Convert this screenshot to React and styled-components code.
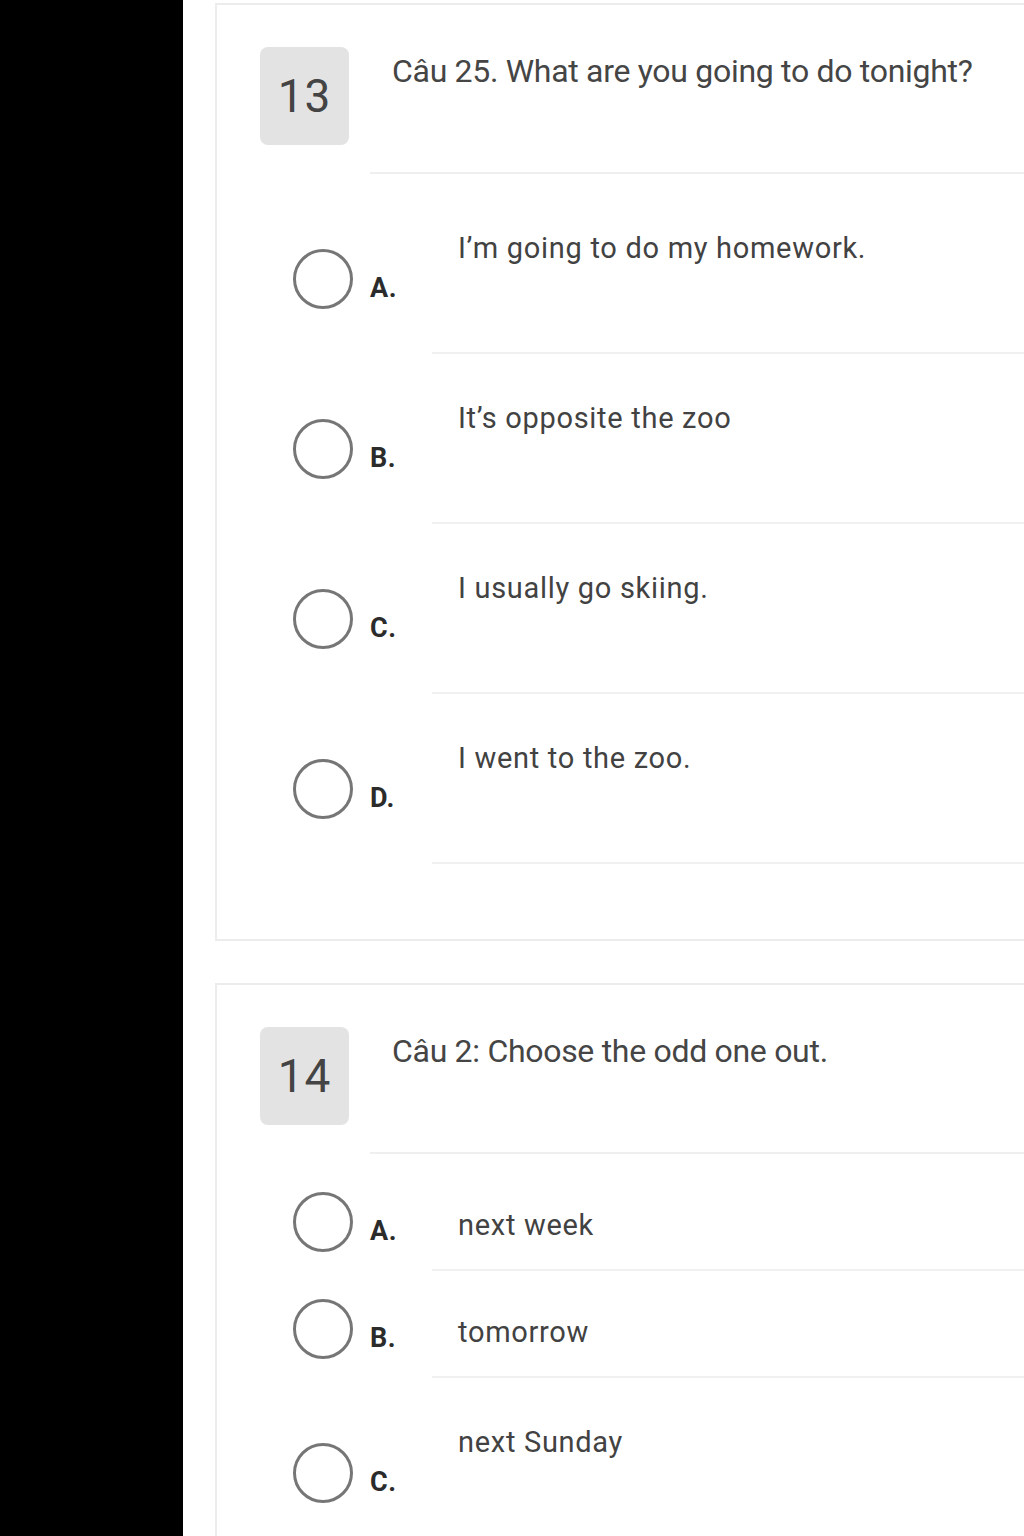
import React from "react";
import styled, { createGlobalStyle } from "styled-components";

const Global = createGlobalStyle`
  html, body { margin: 0; padding: 0; background: #ffffff; overflow: hidden; }
  body { font-family: Roboto, "Noto Sans", "Liberation Sans", sans-serif; }
`;

const Page = styled.div`
  display: flex;
  width: 1024px;
  height: 1536px;
  overflow: hidden;
`;

const Strip = styled.div`
  width: 183px;
  flex: none;
  background: #000;
`;

const Main = styled.div`
  flex: 1;
  padding: 3px 0 0 32px;
  display: flex;
  flex-direction: column;
  gap: 42px;
  min-width: 0;
`;

const Card = styled.section`
  border: 2px solid #ececec;
  border-right: none;
  background: #fff;
  padding: 42px 0 ${(p) => p.$bottom}px 43px;
`;

const Header = styled.div`
  display: flex;
  align-items: flex-start;
`;

const NumBox = styled.div`
  width: 89px;
  height: 98px;
  flex: none;
  border-radius: 8px;
  background: #e3e3e3;
  color: #444;
  font-size: 46px;
  display: flex;
  align-items: center;
  justify-content: center;
  letter-spacing: 1px;
`;

const Question = styled.div`
  flex: 1;
  margin-left: 21px;
  padding: 4px 0 0 22px;
  height: 121px;
  border-bottom: 2px solid #efefef;
  font-size: 32px;
  line-height: 40px;
  color: #454545;
  letter-spacing: -0.3px;
`;

const Options = styled.div`
  padding-top: 10px;
  display: flex;
  flex-direction: column;
`;

const Row = styled.div`
  display: flex;
  align-items: flex-start;
`;

const Choice = styled.label`
  width: 172px;
  flex: none;
  box-sizing: border-box;
  padding-left: 33px;
  margin-top: ${(p) => p.$top}px;
  display: flex;
  align-items: center;
  gap: 17px;
`;

const Radio = styled.span`
  width: 60px;
  height: 60px;
  box-sizing: border-box;
  border-radius: 50%;
  border: 3px solid #767676;
  flex: none;
`;

const Letter = styled.span`
  font-size: 27px;
  font-weight: 700;
  line-height: 34px;
  color: #2b2b2b;
  margin-top: 18px;
  letter-spacing: 0.5px;
`;

const Answer = styled.div`
  flex: 1;
  box-sizing: border-box;
  height: ${(p) => p.$height}px;
  padding: ${(p) => p.$textTop}px 0 0 26px;
  border-bottom: 2px solid #f0f0f0;
  font-size: 29px;
  line-height: 34px;
  color: #424242;
  letter-spacing: 0.7px;
`;

const variants = {
  tall: { height: 170, circleTop: 65, textTop: 47 },
  compact: { height: 107, circleTop: 28, textTop: 44 },
};

const questions = [
  {
    n: 13,
    q: "Câu 25. What are you going to do tonight?",
    bottom: 75,
    opts: [
      ["A.", "I’m going to do my homework.", "tall"],
      ["B.", "It’s opposite the zoo", "tall"],
      ["C.", "I usually go skiing.", "tall"],
      ["D.", "I went to the zoo.", "tall"],
    ],
  },
  {
    n: 14,
    q: "Câu 2: Choose the odd one out.",
    bottom: 40,
    opts: [
      ["A.", "next week", "compact"],
      ["B.", "tomorrow", "compact"],
      ["C.", "next Sunday", "tall"],
    ],
  },
];

export default function App() {
  return (
    <Page>
      <Global />
      <Strip />
      <Main>
        {questions.map((item) => (
          <Card key={item.n} $bottom={item.bottom}>
            <Header>
              <NumBox>{item.n}</NumBox>
              <Question>{item.q}</Question>
            </Header>
            <Options>
              {item.opts.map(([l, t, v]) => {
                const s = variants[v];
                return (
                  <Row key={l}>
                    <Choice $top={s.circleTop}>
                      <Radio />
                      <Letter>{l}</Letter>
                    </Choice>
                    <Answer $height={s.height} $textTop={s.textTop}>
                      {t}
                    </Answer>
                  </Row>
                );
              })}
            </Options>
          </Card>
        ))}
      </Main>
    </Page>
  );
}
